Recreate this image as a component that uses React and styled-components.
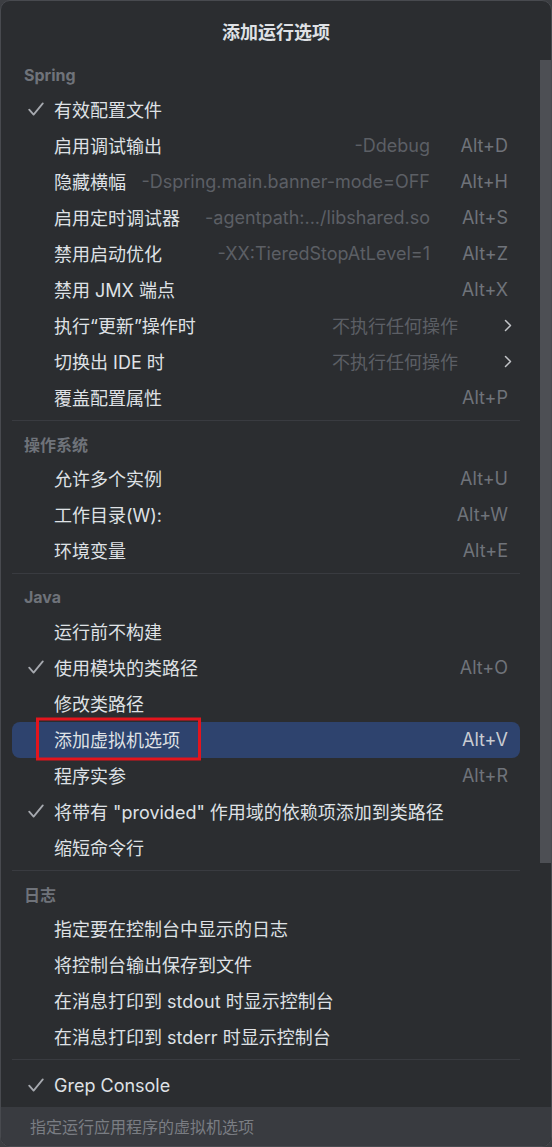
import React from 'react';
import styled, { createGlobalStyle } from 'styled-components';

const Global = createGlobalStyle`
  html, body { margin: 0; padding: 0; background: #3c3e42; }
  body { font-family: Inter, "Noto Sans CJK SC", sans-serif; -webkit-font-smoothing: antialiased; }
  #root { width: 552px; height: 1147px; }
`;

const Popup = styled.div`
  width: 552px;
  height: 1147px;
  box-sizing: border-box;
  background: #2b2d30;
  border: 1px solid #484a4f;
  border-radius: 10px;
  display: flex;
  flex-direction: column;
  overflow: hidden;
`;

const Title = styled.div`
  height: 59px;
  flex-shrink: 0;
  box-sizing: border-box;
  padding-top: 1px;
  display: flex;
  align-items: center;
  justify-content: center;
  font-size: 18px;
  font-weight: 700;
  color: #dfe1e5;
`;

const Body = styled.div`
  flex: 1;
  min-height: 0;
  display: flex;
`;

const List = styled.div`
  flex: 1;
  min-width: 0;
  overflow: hidden;
  padding: 0 20px 0 11px;
`;

const Track = styled.div`
  width: 11px;
  flex-shrink: 0;
`;

const Thumb = styled.div`
  height: 803px;
  background: #4d4f54;
`;

const SectionHeader = styled.div`
  height: 32px;
  box-sizing: border-box;
  padding: 0 0 2px 12px;
  display: flex;
  align-items: center;
  font-size: 16px;
  font-weight: 700;
  color: #6f737a;
`;

const Separator = styled.div`
  height: 1px;
  margin: 4px 0 8px;
  background: #393b40;
`;

const Row = styled.div`
  height: 36px;
  box-sizing: border-box;
  display: flex;
  align-items: center;
  padding: 0 12px 2px 16px;
  border-radius: 8px;
  font-size: 18px;
  white-space: nowrap;
  color: #dfe1e5;
  background: ${(p) => (p.$selected ? '#2e436e' : 'transparent')};
`;

const CheckCell = styled.span`
  width: 26px;
  flex-shrink: 0;
  display: flex;
  align-items: center;
`;

const Label = styled.span`
  position: relative;
  flex-shrink: 0;
`;

const Highlight = styled.span`
  position: absolute;
  left: -18px;
  right: -21px;
  top: 50%;
  height: 43px;
  transform: translateY(-50%);
  border: 3px solid #e3151d;
  box-sizing: border-box;
  pointer-events: none;
`;

const Spacer = styled.span`
  flex: 1;
  min-width: 10px;
`;

const Hint = styled.span`
  color: #5c5f65;
  margin-right: 22px;
`;

const Value = styled.span`
  color: #5c5f65;
  margin-right: 46px;
`;

const Shortcut = styled.span`
  width: 56px;
  flex-shrink: 0;
  text-align: right;
  color: ${(p) => (p.$selected ? '#c9ccd2' : '#6f737a')};
`;

const ChevronCell = styled.span`
  display: flex;
  align-items: center;
  margin-right: -4px;
`;

const Footer = styled.div`
  height: 39px;
  flex-shrink: 0;
  box-sizing: border-box;
  display: flex;
  align-items: center;
  padding: 0 0 2px 29px;
  background: #393b40;
  font-size: 16px;
  color: #7a7d83;
`;

const Check = () => (
  <svg width="16" height="15" viewBox="0 0 16 15">
    <polyline points="1.2,7.6 5.6,12.6 14.8,1.4" fill="none" stroke="#a6a9af" strokeWidth="1.8" strokeLinecap="round" strokeLinejoin="round" />
  </svg>
);

const Chevron = () => (
  <svg width="8" height="13" viewBox="0 0 8 13">
    <polyline points="1.5,1.5 6.5,6.5 1.5,11.5" fill="none" stroke="#c2c4c8" strokeWidth="1.5" strokeLinecap="round" strokeLinejoin="round" />
  </svg>
);

const sections = [
  {
    title: 'Spring',
    items: [
      { check: true, label: '有效配置文件' },
      { label: '启用调试输出', hint: '-Ddebug', key: 'Alt+D' },
      { label: '隐藏横幅', hint: '-Dspring.main.banner-mode=OFF', key: 'Alt+H' },
      { label: '启用定时调试器', hint: '-agentpath:.../libshared.so', key: 'Alt+S' },
      { label: '禁用启动优化', hint: '-XX:TieredStopAtLevel=1', key: 'Alt+Z' },
      { label: '禁用 JMX 端点', key: 'Alt+X' },
      { label: '执行“更新”操作时', value: '不执行任何操作', submenu: true },
      { label: '切换出 IDE 时', value: '不执行任何操作', submenu: true },
      { label: '覆盖配置属性', key: 'Alt+P' },
    ],
  },
  {
    title: '操作系统',
    items: [
      { label: '允许多个实例', key: 'Alt+U' },
      { label: '工作目录(W):', key: 'Alt+W' },
      { label: '环境变量', key: 'Alt+E' },
    ],
  },
  {
    title: 'Java',
    items: [
      { label: '运行前不构建' },
      { check: true, label: '使用模块的类路径', key: 'Alt+O' },
      { label: '修改类路径' },
      { label: '添加虚拟机选项', key: 'Alt+V', selected: true, highlight: true },
      { label: '程序实参', key: 'Alt+R' },
      { check: true, label: '将带有 "provided" 作用域的依赖项添加到类路径' },
      { label: '缩短命令行' },
    ],
  },
  {
    title: '日志',
    items: [
      { label: '指定要在控制台中显示的日志' },
      { label: '将控制台输出保存到文件' },
      { label: '在消息打印到 stdout 时显示控制台' },
      { label: '在消息打印到 stderr 时显示控制台' },
    ],
  },
  {
    title: null,
    items: [{ check: true, label: 'Grep Console' }],
  },
];

const MenuRow = ({ item }) => (
  <Row $selected={item.selected}>
    <CheckCell>{item.check && <Check />}</CheckCell>
    <Label>
      {item.label}
      {item.highlight && <Highlight />}
    </Label>
    <Spacer />
    {item.hint && <Hint>{item.hint}</Hint>}
    {item.value && <Value>{item.value}</Value>}
    {item.key && <Shortcut $selected={item.selected}>{item.key}</Shortcut>}
    {item.submenu && (
      <ChevronCell>
        <Chevron />
      </ChevronCell>
    )}
  </Row>
);

export default function App() {
  return (
    <>
      <Global />
      <Popup>
        <Title>添加运行选项</Title>
        <Body>
          <List>
            {sections.map((s, i) => (
              <React.Fragment key={i}>
                {i > 0 && <Separator />}
                {s.title && <SectionHeader>{s.title}</SectionHeader>}
                {s.items.map((it, j) => (
                  <MenuRow key={j} item={it} />
                ))}
              </React.Fragment>
            ))}
          </List>
          <Track>
            <Thumb />
          </Track>
        </Body>
        <Footer>指定运行应用程序的虚拟机选项</Footer>
      </Popup>
    </>
  );
}
